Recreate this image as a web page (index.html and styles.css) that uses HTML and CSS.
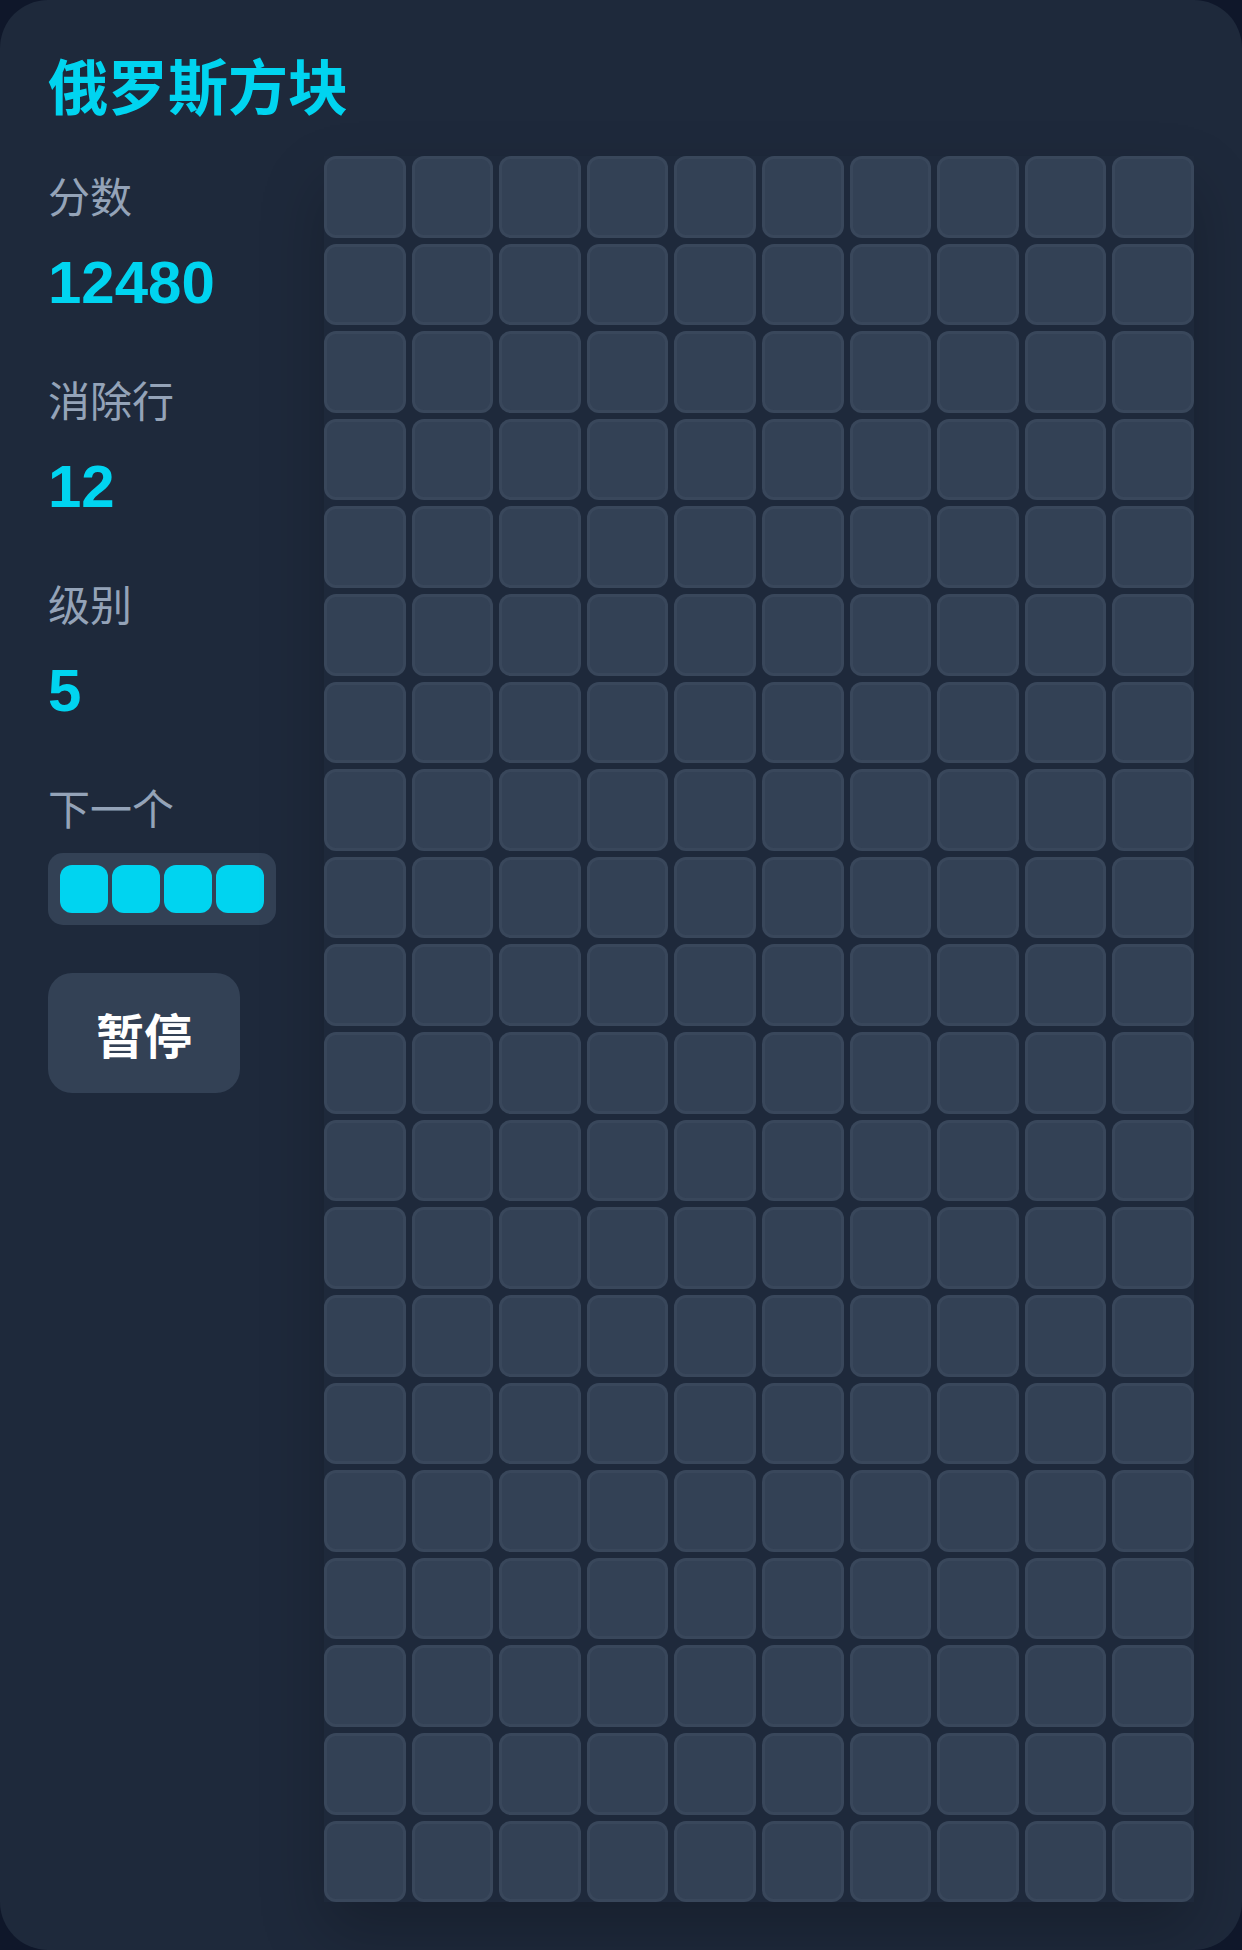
FILE: index.html
```html
<!DOCTYPE html>
<html lang="zh">
<head>
<meta charset="utf-8">
<title>俄罗斯方块</title>
<link rel="stylesheet" href="styles.css">
</head>
<body>
<div class="card">
  <h1 class="title">俄罗斯方块</h1>
  <div class="main">
    <aside class="panel">
      <div class="stat">
        <div class="label">分数</div>
        <div class="value">12480</div>
      </div>
      <div class="stat">
        <div class="label">消除行</div>
        <div class="value">12</div>
      </div>
      <div class="stat">
        <div class="label">级别</div>
        <div class="value">5</div>
      </div>
      <div class="stat next">
        <div class="label">下一个</div>
        <div class="preview">
          <span class="pcell"></span><span class="pcell"></span><span class="pcell"></span><span class="pcell"></span>
        </div>
      </div>
      <button class="btn">暂停</button>
    </aside>
    <div class="board" id="board"></div>
  </div>
</div>
<script>
  var b = document.getElementById('board');
  for (var i = 0; i < 200; i++) {
    var c = document.createElement('div');
    c.className = 'cell';
    b.appendChild(c);
  }
</script>
</body>
</html>
```
FILE: styles.css
```css
html, body {
  margin: 0;
  padding: 0;
  background: #0f172a;
}
body {
  font-family: "Liberation Sans", "Noto Sans CJK SC", sans-serif;
}
.card {
  box-sizing: border-box;
  width: 1242px;
  height: 1950px;
  padding: 48px;
  background: #1e293b;
  border-radius: 48px;
  overflow: hidden;
}
.title {
  margin: 0 0 24px 0;
  font-size: 60px;
  line-height: 84px;
  font-weight: 700;
  color: #00d4f0;
}
.main {
  display: flex;
  gap: 48px;
  align-items: flex-start;
}
.panel {
  width: 228px;
  flex: none;
  padding-top: 11px;
  display: flex;
  flex-direction: column;
}
.stat {
  margin-bottom: 52px;
}
.label {
  font-size: 42px;
  line-height: 63px;
  color: #94a3b8;
}
.value {
  margin-top: 17px;
  font-size: 60px;
  line-height: 72px;
  font-weight: 700;
  color: #00d4f0;
}
.stat.next {
  margin-bottom: 48px;
}
.preview {
  margin-top: 11px;
  box-sizing: border-box;
  width: 228px;
  padding: 12px;
  display: flex;
  gap: 4px;
  background: #334155;
  border-radius: 15px;
}
.pcell {
  width: 48px;
  height: 48px;
  border-radius: 12px;
  background: #00d4f0;
}
.btn {
  width: 192px;
  height: 120px;
  border: none;
  border-radius: 24px;
  background: #334155;
  color: #ffffff;
  font-family: "Liberation Sans", "Noto Sans CJK SC", sans-serif;
  font-size: 48px;
  font-weight: 700;
  padding: 0;
}
.board {
  flex: 1;
  display: grid;
  grid-template-columns: repeat(10, 1fr);
  gap: 6px;
  box-shadow: 0 30px 60px rgba(0, 0, 0, 0.22);
}
.cell {
  box-sizing: border-box;
  aspect-ratio: 1 / 1;
  background: #334155;
  border: 3px solid rgba(148, 163, 184, 0.06);
  border-radius: 12px;
}
```
